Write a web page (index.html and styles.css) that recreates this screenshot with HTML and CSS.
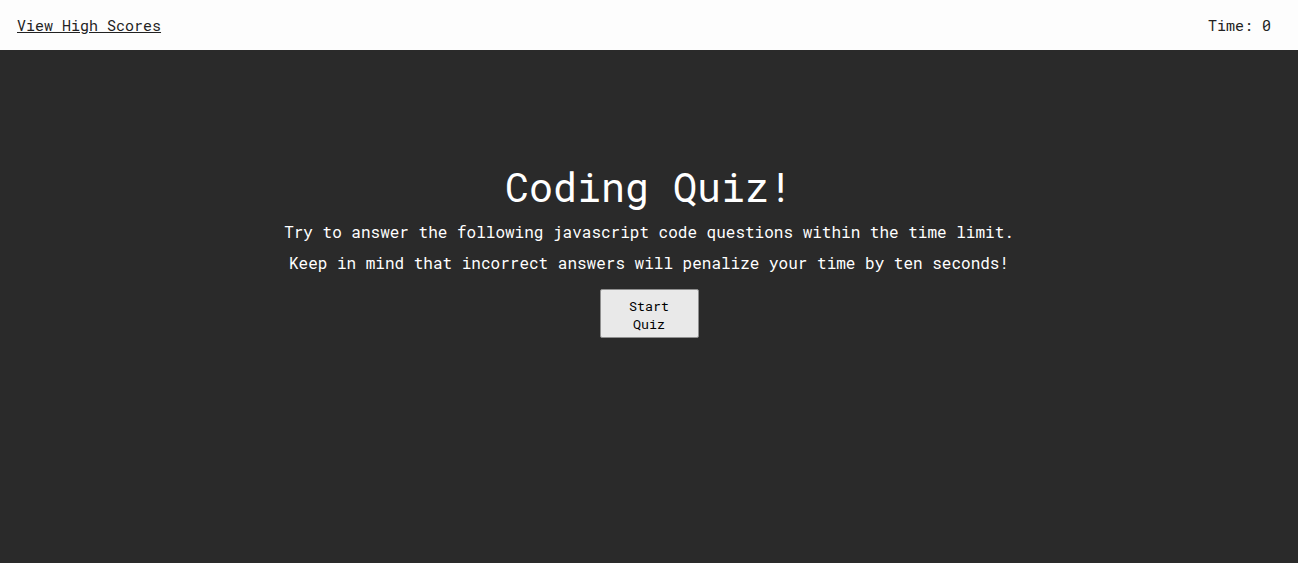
FILE: index.html
```html
<!DOCTYPE html>
<html>
<head>
<meta charset="utf-8">
<link rel="stylesheet" href="styles.css">
</head>
<body>
<header class="topbar">
  <a class="scores-link" href="#">View High Scores</a>
  <span class="timer">Time: 0</span>
</header>
<main class="stage">
  <section class="intro">
    <h1 class="title">Coding Quiz!</h1>
    <p class="desc">Try to answer the following javascript code questions within the time limit.</p>
    <p class="desc">Keep in mind that incorrect answers will penalize your time by ten seconds!</p>
    <button class="start-btn">Start Quiz</button>
  </section>
</main>
</body>
</html>
```
FILE: styles.css
```css
html, body {
  margin: 0;
  padding: 0;
  height: 100%;
}
body {
  font-family: "Roboto Mono", "DejaVu Sans Mono", "Liberation Mono", monospace;
  background: #2a2a2a;
  display: flex;
  flex-direction: column;
}
.topbar {
  height: 50px;
  background: #fdfdfd;
  display: flex;
  align-items: center;
  justify-content: space-between;
  padding: 0 27px 0 17px;
  font-size: 15px;
  color: #222;
}
.scores-link {
  color: #222;
  text-decoration: underline;
}
.stage {
  flex: 1;
  display: flex;
  justify-content: center;
  padding-top: 113px;
}
.intro {
  display: flex;
  flex-direction: column;
  align-items: center;
  color: #fff;
}
.title {
  font-size: 40px;
  font-weight: 400;
  margin: 0 0 5px;
  line-height: 48px;
}
.desc {
  font-size: 16px;
  margin: 0;
  line-height: 31px;
}
.start-btn {
  margin-top: 11px;
  width: 99px;
  height: 49px;
  font-family: inherit;
  font-size: 13.33px;
  line-height: 18px;
  background: #e9e9e9;
  border: 1px solid #8f8f8f;
  border-radius: 2px;
  padding: 5px 16px 3px;
  color: #000;
}
```
